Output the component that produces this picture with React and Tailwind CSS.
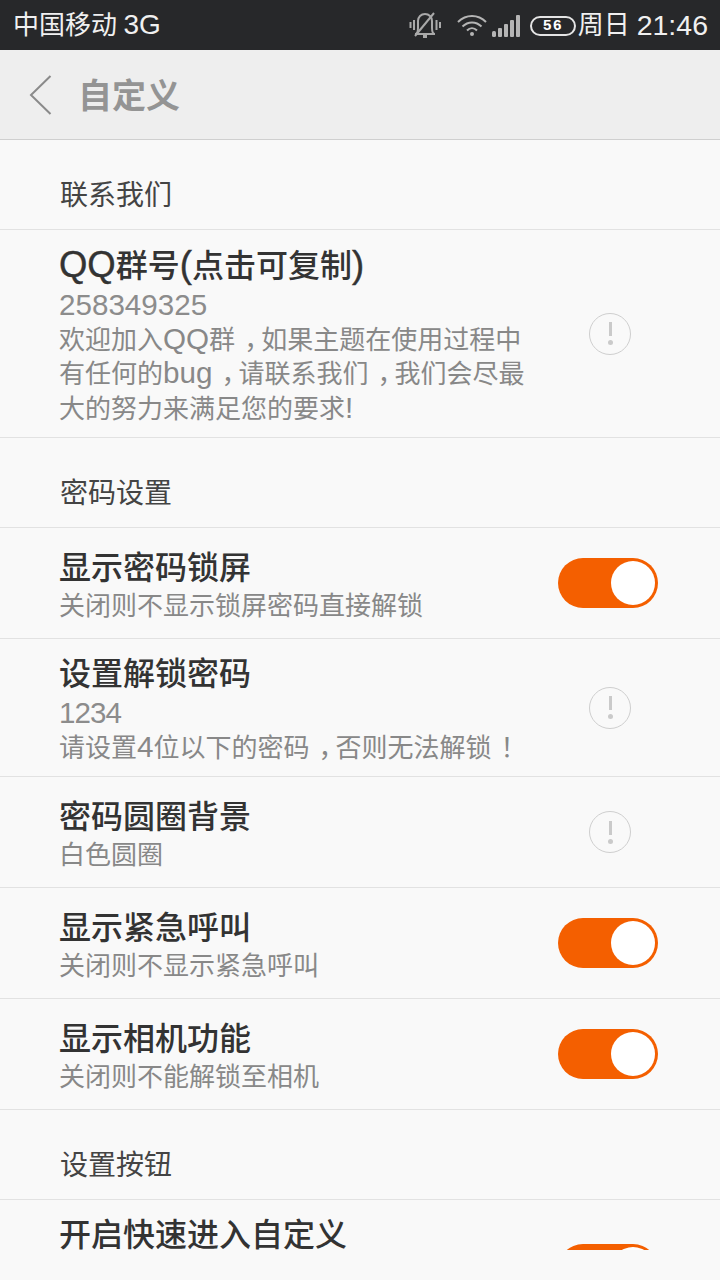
import React from 'react';

// latin glyphs in the reference run bigger than the CJK around them
const Lat = ({ children, heavy }) => (
  <span className={heavy ? 'text-[1.14em] leading-none [-webkit-text-stroke:0.4px]' : 'text-[1.14em] leading-none'} style={{ fontFamily: '"Liberation Sans", sans-serif' }}>
    {children}
  </span>
);

// full-width punctuation sits in the middle of its cell
const Punct = ({ children }) => (
  <span className="inline-block pl-[9px] pr-[4px] leading-none [font-feature-settings:'halt']">{children}</span>
);

const Toggle = () => (
  <div className="flex h-[50px] w-[100px] shrink-0 items-center justify-end rounded-full bg-[#f45f00] pr-[3px]">
    <div className="h-[44px] w-[44px] rounded-full bg-white" />
  </div>
);

const Info = () => (
  <div className="mr-[27px] flex h-[42px] w-[42px] shrink-0 flex-col items-center justify-center rounded-full border border-[#cfcfcf]">
    <div className="h-[14px] w-[3px] bg-[#cacaca]" />
    <div className="mt-[4px] h-[5px] w-[5px] rounded-full bg-[#cacaca]" />
  </div>
);

const SectionTitle = ({ children }) => (
  <div className="flex h-[90px] items-end border-b border-[#e2e2e2] pb-[13px] pl-[60px] text-[28px] leading-[40px] text-[#444]">
    {children}
  </div>
);

const Row = ({ title, value, desc, right, h, valueClass = '' }) => (
  <div className={`flex items-center justify-between border-b border-[#e2e2e2] pl-[59px] pr-[62px] ${h}`}>
    <div className={desc ? 'w-[480px] pt-[6px]' : 'w-[480px] self-start pt-[16px]'}>
      <div className="mb-[2px] text-[32px] leading-[38px] font-medium text-[#333]">{title}</div>
      {value && (
        <div className={`text-[29.6px] leading-[36px] text-[#8c8c8c] ${valueClass}`} style={{ fontFamily: '"Liberation Sans", sans-serif' }}>
          {value}
        </div>
      )}
      {desc && <div className="text-[26px] leading-[34.5px] text-[#888]">{desc}</div>}
    </div>
    {right === 'toggle' ? <Toggle /> : right === 'info' ? <Info /> : null}
  </div>
);

const StatusIcons = () => (
  <div className="flex items-center">
    {/* muted bell */}
    <svg width="32" height="26" viewBox="0 0 32 26" fill="none" stroke="#a9a9a9" strokeWidth="2">
      <path d="M1.500 10v6M5 8v10M27.500 8v10M31 10v6" />
      <path d="M6 22c2 0 3-2 3-6V9c0-4 3-7 7-7s7 3 7 7v7c0 4 1 6 3 6z" />
      <path d="M6 24 25 1" />
      <path d="M14 24.500h4" strokeWidth="3" />
    </svg>
    {/* wifi */}
    <svg className="ml-[16px]" width="30" height="22" viewBox="0 0 30 22" fill="none" stroke="#b5b5b5" strokeWidth="2">
      <path d="M1 8c8-8 20-8 28 0" />
      <path d="M5.500 12.500c5.500-5.500 13.500-5.500 19 0" />
      <path d="M10 16.500c3-3 7-3 10 0" />
      <circle cx="15" cy="20" r="2" fill="#b5b5b5" stroke="none" />
    </svg>
    {/* signal */}
    <svg className="ml-[5px] mt-[2px]" width="28" height="22" viewBox="0 0 28 22" fill="#b5b5b5">
      <rect x="0" y="16" width="4" height="6" rx="1.500" />
      <rect x="6" y="13" width="4" height="9" rx="1" />
      <rect x="12" y="9" width="4" height="13" rx="1" />
      <rect x="18" y="5" width="4" height="17" rx="1" />
      <rect x="24" y="0" width="4" height="22" rx="1" />
    </svg>
    {/* battery */}
    <div className="ml-[10px] mt-[2px] flex h-[20px] w-[46px] items-center justify-center rounded-full border-2 border-[#e4e4e4]">
      <span className="text-[15px] leading-none font-bold tracking-[1px] text-white" style={{ fontFamily: '"Liberation Mono", monospace' }}>56</span>
    </div>
  </div>
);

const App = () => {
  return (
    <div className="flex h-[1280px] w-[720px] flex-col bg-[#f9f9f9]" style={{ fontFamily: 'Roboto, "Noto Sans CJK SC", sans-serif' }}>
      <div className="flex h-[50px] shrink-0 items-center justify-between bg-[#27282a] pl-[13px] pr-[12px] text-[#f0f0f0]">
        <span className="text-[26px] leading-none">
          中国移动 <span className="text-[28px] leading-none" style={{ fontFamily: '"Liberation Sans", sans-serif' }}>3G</span>
        </span>
        <div className="flex items-center">
          <StatusIcons />
          <span className="ml-[2px] text-[26px] leading-none">周日</span>
          <span className="ml-[7px] text-[28.5px] leading-none" style={{ fontFamily: '"Liberation Sans", sans-serif' }}>21:46</span>
        </div>
      </div>

      <div className="flex h-[90px] shrink-0 items-center border-b border-[#cfcfcf] bg-[#eeeeee]">
        <svg className="ml-[29px]" width="24" height="42" viewBox="0 0 24 42" fill="none" stroke="#8a8a8a" strokeWidth="2">
          <path d="M21.500 2 2 21l19.500 19" />
        </svg>
        <span className="ml-[25px] pt-[3px] text-[34px] leading-none font-bold text-[#949494]">自定义</span>
      </div>

      <div className="h-[1110px] shrink-0 overflow-hidden">
        <SectionTitle>联系我们</SectionTitle>
        <Row
          h="h-[208px]"
          title={<><Lat heavy>QQ</Lat>群号<Lat heavy>(</Lat>点击可复制<Lat heavy>)</Lat></>}
          value="258349325"
          desc={
            <>
              欢迎加入<Lat>QQ</Lat>群<Punct>，</Punct>如果主题在使用过程中<br />
              有任何的<Lat>bug</Lat><Punct>，</Punct>请联系我们<Punct>，</Punct>我们会尽最<br />
              大的努力来满足您的要求<Lat>!</Lat>
            </>
          }
          right="info"
        />
        <SectionTitle>密码设置</SectionTitle>
        <Row h="h-[111px]" title="显示密码锁屏" desc="关闭则不显示锁屏密码直接解锁" right="toggle" />
        <Row
          h="h-[138px]"
          title="设置解锁密码"
          value="1234"
          valueClass="tracking-[-1px]"
          desc={<>请设置<Lat>4</Lat>位以下的密码<Punct>，</Punct>否则无法解锁<Punct>！</Punct></>}
          right="info"
        />
        <Row h="h-[111px]" title="密码圆圈背景" desc="白色圆圈" right="info" />
        <Row h="h-[111px]" title="显示紧急呼叫" desc="关闭则不显示紧急呼叫" right="toggle" />
        <Row h="h-[111px]" title="显示相机功能" desc="关闭则不能解锁至相机" right="toggle" />
        <SectionTitle>设置按钮</SectionTitle>
        <Row h="h-[138px]" title="开启快速进入自定义" right="toggle" />
      </div>
    </div>
  );
};

export default App;
